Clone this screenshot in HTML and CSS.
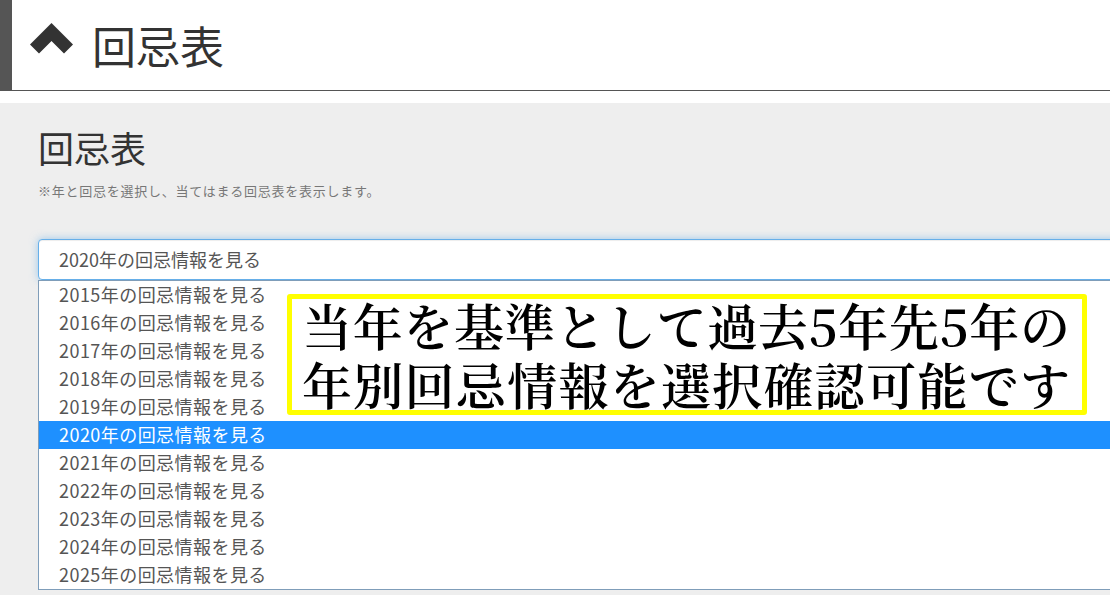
FILE: index.html
```html
<!DOCTYPE html>
<html lang="ja">
<head>
<meta charset="utf-8">
<title>回忌表</title>
<link rel="stylesheet" href="styles.css">
</head>
<body>
<header class="page-head">
  <svg class="head-icon" width="43" height="31" viewBox="0 0 43 31" aria-hidden="true">
    <polygon points="0,21.5 21.5,0 43,21.5 34,30.5 21.5,18 9,30.5" fill="#333"/>
  </svg>
  <h1 class="head-title">回忌表</h1>
</header>

<section class="panel">
  <h2 class="panel-title">回忌表</h2>
  <p class="panel-note">※年と回忌を選択し、当てはまる回忌表を表示します。</p>

  <div class="picker">
    <div class="picker-box">2020年の回忌情報を見る</div>
    <ul class="picker-list">
      <li class="picker-item">2015年の回忌情報を見る</li>
      <li class="picker-item">2016年の回忌情報を見る</li>
      <li class="picker-item">2017年の回忌情報を見る</li>
      <li class="picker-item">2018年の回忌情報を見る</li>
      <li class="picker-item">2019年の回忌情報を見る</li>
      <li class="picker-item is-active">2020年の回忌情報を見る</li>
      <li class="picker-item">2021年の回忌情報を見る</li>
      <li class="picker-item">2022年の回忌情報を見る</li>
      <li class="picker-item">2023年の回忌情報を見る</li>
      <li class="picker-item">2024年の回忌情報を見る</li>
      <li class="picker-item">2025年の回忌情報を見る</li>
    </ul>
    <div class="callout">
      <p class="callout-text">当年を基準として過去5年先5年の年別回忌情報を選択確認可能です</p>
    </div>
  </div>
</section>
</body>
</html>
```

FILE: styles.css
```css
html, body {
  margin: 0;
  padding: 0;
  background: #fff;
  overflow: hidden;
}

body {
  font-family: "Noto Sans CJK JP", "Noto Sans", sans-serif;
  color: #333;
}

/* top heading bar */
.page-head {
  height: 90px;
  display: flex;
  align-items: center;
  gap: 19px;
  padding-left: 18px;
  border-left: 12px solid #555;
  border-bottom: 1px solid #555;
}

.head-icon {
  display: block;
  margin-bottom: 14px;
}

.head-title {
  margin: 0;
  font-size: 44px;
  font-weight: 400;
  line-height: 1;
  color: #333;
}

/* grey content panel */
.panel {
  margin-top: 12px;
  background: #eee;
  padding: 24px 0 0 38px;
  height: 480px;
}

.panel-title {
  margin: 0;
  font-size: 36px;
  font-weight: 400;
  line-height: 40px;
  color: #333;
}

.panel-note {
  margin: 14px 0 0;
  font-size: 13px;
  line-height: 20px;
  letter-spacing: 0.75px;
  color: #777;
}

/* select with its open list */
.picker {
  position: relative;
  margin-top: 38px;
  margin-right: -60px;
}

.picker-box {
  height: 41px;
  box-sizing: border-box;
  padding-left: 20px;
  border: 1px solid #66afe9;
  border-radius: 4px;
  background: #fff;
  box-shadow: inset 0 1px 1px rgba(0, 0, 0, .075), 0 0 8px rgba(102, 175, 233, .6);
  font-size: 18px;
  line-height: 39px;
  color: #555;
}

.picker-list {
  position: absolute;
  left: 0;
  right: 0;
  top: 41px;
  margin: 0;
  padding: 0;
  list-style: none;
  background: #fff;
  border: 1px solid #7f9db9;
}

.picker-item {
  height: 28px;
  padding-left: 20px;
  font-size: 18px;
  line-height: 27px;
  letter-spacing: 0.45px;
  color: #555;
}

.picker-item.is-active {
  background: #1e90ff;
  color: #fff;
}

/* annotation box laid over the list */
.callout {
  position: absolute;
  left: 249px;
  top: 55px;
  width: 800px;
  height: 121px;
  box-sizing: border-box;
  border: 5px solid #ffff00;
  border-radius: 3px;
  background: #fff;
  padding: 0 12px 0 10px;
}

.callout-text {
  margin: -4px 0 0;
  font-family: "Noto Serif CJK JP", "Liberation Serif", "Noto Sans CJK JP", serif;
  font-weight: 600;
  font-size: 50px;
  line-height: 59px;
  color: #000;
  text-align: justify;
  text-align-last: justify;
  text-justify: inter-character;
}
```
